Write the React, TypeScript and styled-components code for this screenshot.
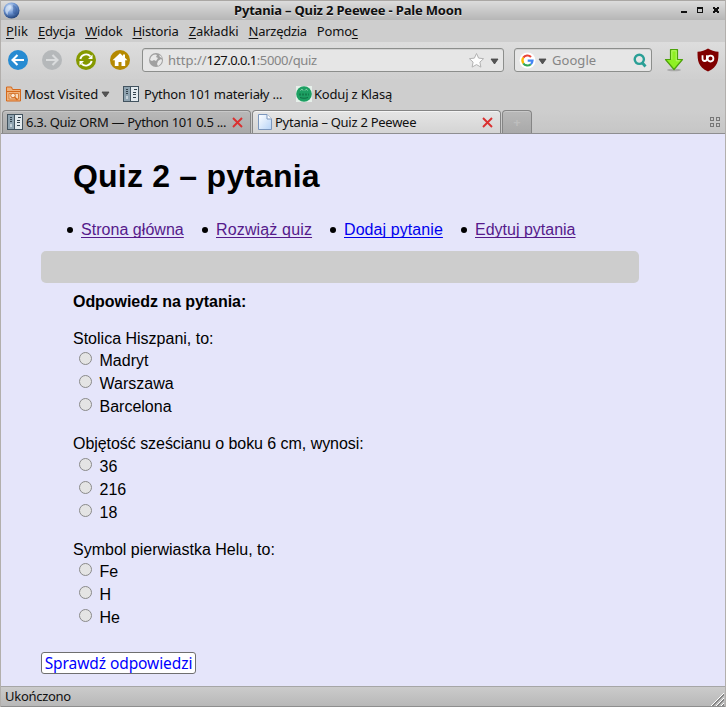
import React from 'react';
import styled, { createGlobalStyle, css } from 'styled-components';

const GlobalStyle = createGlobalStyle`
  * { box-sizing: border-box; }
  html, body { margin: 0; padding: 0; }
  body { width: 726px; height: 707px; overflow: hidden; }
`;

const Window = styled.div`
  width: 726px;
  height: 707px;
  display: flex;
  flex-direction: column;
  border: 1px solid #b2afac;
  border-width: 0 1px;
  background: #cecece;
  font: 13px/18px "Noto Sans", "Open Sans", sans-serif;
  color: #101010;
  white-space: pre;
`;

const Label = styled.span<{ $track?: number }>`
  letter-spacing: ${(p) => p.$track ?? -0.2}px;
  white-space: pre;
  flex: none;
`;

/* Title bar */
const TitleBar = styled.header`
  height: 20px;
  flex: none;
  display: grid;
  grid-template-columns: 60px 1fr 60px;
  align-items: center;
  padding: 0 5px 1px 2px;
  border-top: 1px solid #aaa7a4;
  background: linear-gradient(#dcdcdc, #b6b6b6);
`;

const WindowTitle = styled.h1`
  margin: 0;
  padding-right: 27px;
  text-align: center;
  font-size: 13px;
  line-height: 18px;
  font-weight: 700;
  text-shadow: 0 1px 0 #e4e4e4;
`;

const WindowButtons = styled.div`
  display: flex;
  justify-content: flex-end;
  align-items: center;
`;

/* Menu */
const MenuBar = styled.nav`
  height: 22px;
  flex: none;
  display: flex;
  align-items: center;
  padding: 0 0 1px 5px;
  gap: 10px;
`;

const Mnemonic = styled.span`
  text-decoration: underline;
  text-underline-offset: 2px;
  text-decoration-thickness: 1px;
`;

/* Navigation toolbar */
const Toolbar = styled.div`
  height: 37px;
  flex: none;
  display: flex;
  align-items: center;
  padding: 0 6px 1px 7px;
  background: linear-gradient(#dddddd, #cfcfcf);
`;

const RoundButton = styled.button<{ $color: string }>`
  width: 20px;
  height: 20px;
  margin: 0 14px 0 0;
  padding: 0;
  border: 0;
  border-radius: 50%;
  background: ${(p) => p.$color};
  flex: none;
  display: flex;
`;

const field = css`
  height: 24px;
  flex: none;
  display: flex;
  align-items: center;
  border: 1px solid #8c8e8c;
  border-radius: 3px;
  background: #e6e6e6;
  box-shadow: inset 0 1px 0 #d2d2d2;
`;

const AddressBar = styled.div`
  ${field}
  width: 362px;
  margin-left: -2px;
  padding: 0 4px 0 5px;
`;

const SearchBox = styled.div`
  ${field}
  width: 138px;
  margin-left: 10px;
  padding: 0 4px 0 4px;
`;

const Muted = styled(Label)`
  color: #858585;
`;

const UrlText = styled.div`
  flex: 1;
  padding-left: 4px;
  display: flex;
`;

const SearchHint = styled(Muted)`
  flex: 1;
  margin-left: 5px;
`;

const ToolIcon = styled.div<{ $left: number; $top?: number }>`
  margin-left: ${(p) => p.$left}px;
  padding-top: ${(p) => p.$top ?? 0}px;
  display: flex;
  flex: none;
`;

/* Bookmarks */
const BookmarksBar = styled.div`
  height: 31px;
  flex: none;
  display: flex;
  align-items: center;
  padding: 0 0 2px 5px;
`;

const Bookmark = styled.div<{ $gap: number; $width: number }>`
  display: flex;
  align-items: center;
  gap: ${(p) => p.$gap}px;
  width: ${(p) => p.$width}px;
`;

/* Tabs */
const TabStrip = styled.div`
  height: 24px;
  flex: none;
  display: flex;
  align-items: stretch;
  padding-left: 1px;
  border-bottom: 1px solid #8e8e90;
  background: linear-gradient(#cecece, #c6c6c6);
`;

const Tab = styled.div<{ $active?: boolean; $width: number }>`
  width: ${(p) => p.$width}px;
  display: flex;
  align-items: center;
  padding: 0 7px 1px 4px;
  margin-right: 1px;
  border: 1px solid #858585;
  border-bottom: 0;
  border-radius: 4px 4px 0 0;
  box-shadow: inset 0 1px 0 ${(p) => (p.$active ? '#f4f4f4' : '#c9c9c9')};
  background: ${(p) => (p.$active ? 'linear-gradient(#e5e5e5, #d4d4d4)' : 'linear-gradient(#b9b9b9, #a9a9a9)')};
`;

const TabTitle = styled(Label)`
  flex: 1;
  margin-left: 3px;
`;

const NewTab = styled(Tab)`
  justify-content: center;
  padding: 0;
  color: #bebebe;
  font-weight: 700;
`;

const TabGrid = styled.div`
  flex: 1;
  display: flex;
  justify-content: flex-end;
  align-items: center;
  padding: 0 5px 0 0;
`;

/* Page */
const Page = styled.main`
  flex: 1;
  min-height: 0;
  padding: 24px 0 0 40px;
  background: #e5e5fa;
  color: #000;
  font: 16px/18px "Liberation Sans", Arial, sans-serif;
`;

const Heading = styled.h2`
  margin: 0 0 0 32px;
  font-size: 32px;
  line-height: 36px;
  letter-spacing: 0.2px;
`;

const LinkList = styled.ul`
  list-style: none;
  display: flex;
  margin: 27px 0 0;
  padding: 0 0 0 26px;
`;

const LinkItem = styled.li<{ $width: number }>`
  width: ${(p) => p.$width}px;
  display: flex;
  align-items: center;
  gap: 8px;
  &::before {
    content: '';
    width: 6px;
    height: 6px;
    border-radius: 50%;
    background: #000;
  }
`;

const PageLink = styled.a<{ $fresh?: boolean; $track?: number }>`
  color: ${(p) => (p.$fresh ? '#0000ee' : '#551a8b')};
  letter-spacing: ${(p) => p.$track ?? 0}px;
  text-decoration: underline;
  text-underline-offset: 2px;
  text-decoration-thickness: 1px;
  text-decoration-skip-ink: none;
`;

const MessageBar = styled.div`
  width: 598px;
  height: 32px;
  margin-top: 12px;
  border-radius: 5px;
  background: #cdcdcd;
`;

const Instruction = styled.p`
  margin: 10px 0 0 32px;
  font-weight: 700;
  letter-spacing: -0.05px;
`;

const Questions = styled.div`
  margin: 19px 0 0 32px;
`;

const Question = styled.section`
  height: 105.4px;
`;

const QuestionText = styled.div<{ $track?: number }>`
  height: 18.15px;
  letter-spacing: ${(p) => p.$track ?? 0}px;
`;

const Option = styled.label`
  height: 23px;
  display: flex;
  align-items: flex-start;
  padding: 4px 0 0 6px;
`;

const Radio = styled.span`
  width: 13px;
  height: 13px;
  margin: 0 7.5px 0 0;
  border: 1px solid #8a8a8a;
  border-radius: 50%;
  background: #e4e4e4;
`;

const SubmitButton = styled.button`
  display: flex;
  align-items: center;
  justify-content: center;
  width: 155px;
  height: 22px;
  margin: 5.8px 0 0;
  padding: 0;
  border: 1px solid #6f6f6f;
  border-radius: 3px;
  background: #fff;
  color: #0000ff;
  font: 15.5px/20px "Noto Sans", "Open Sans", sans-serif;
`;

/* Status */
const StatusBar = styled.footer`
  height: 21px;
  flex: none;
  display: flex;
  align-items: center;
  justify-content: space-between;
  padding-left: 4px;
  border-top: 1px solid #a6a6a6;
  border-bottom: 1px solid #8e8e8e;
  background: linear-gradient(#cbcbcb, #b8b8b8);
`;

const StatusText = styled(Label)`
  padding-bottom: 1.5px;
`;

const GripHolder = styled.div`
  display: flex;
  align-self: flex-end;
`;

const MoonIcon = () => (
  <svg width="17" height="17" viewBox="0 0 17 17">
    <defs>
      <radialGradient id="moon" cx=".4" cy=".3" r=".75">
        <stop offset="0" stopColor="#d5e4f8" />
        <stop offset=".5" stopColor="#6e95d2" />
        <stop offset="1" stopColor="#16376f" />
      </radialGradient>
    </defs>
    <circle cx="8.5" cy="8.5" r="8" fill="url(#moon)" />
    <path d="M4 4c3-2 5-1 4 2S4 9 5 13c-3-2-4-6-1-9z" fill="#dce8f8" opacity=".65" />
    <path d="M10 3c4 1 5 5 3 9-2 1-4-1-3-4s-1-3 0-5z" fill="#23498c" opacity=".4" />
  </svg>
);

const WindowControls = () => (
  <svg width="40" height="8" viewBox="0 0 40 8" fill="none" stroke="#111" shapeRendering="crispEdges">
    <path d="M1 6h6" strokeWidth="2" />
    <path d="M17.5 1.5h5v5h-5zM17 2h6" />
    <path d="M33 1h2v1h2v-1h2v2h-1v2h1v2h-2v-1h-2v1h-2v-2h1v-2h-1z" fill="#111" stroke="none" />
  </svg>
);

const ArrowGlyph = ({ flip, color = '#fff' }: { flip?: boolean; color?: string }) => (
  <svg width="20" height="20" viewBox="0 0 20 20" fill="none" stroke={color} strokeWidth="2.1">
    {flip ? <path d="M4 10h11M10.5 5l5 5-5 5" /> : <path d="M16 10H5M9.500 5l-5 5 5 5" />}
  </svg>
);

const ReloadGlyph = () => (
  <svg width="20" height="20" viewBox="0 0 20 20" fill="none" stroke="#fff" strokeWidth="1.9">
    <path d="M4.300 9A6 6 0 0 1 14.500 6.300M15.700 11A6 6 0 0 1 5.500 13.700" />
    <path d="M16.500 4.500V9H12zM3.500 15.500V11H8z" fill="#fff" stroke="none" />
  </svg>
);

const HomeGlyph = () => (
  <svg width="20" height="20" viewBox="0 0 20 20">
    <path d="M10 3.300 2.500 10.300h2.300V16h3.700v-4h3v4h3.700v-5.700h2.300L15 7.700V4.500h-2v1.400z" fill="#fff" />
  </svg>
);

const GlobeIcon = () => (
  <svg width="16" height="16" viewBox="0 0 16 16">
    <circle cx="8" cy="8" r="7" fill="#a0a0a0" />
    <path d="M3 5c2-3 5-3 6-2L8 5l2 1-2 3-2-1-2 1-2-1zM10 9l3-2 1 1c0 3-2 5-4 6l-1-2zM11 3l2 1 1 2-2-1z" fill="#e9e9e9" />
  </svg>
);

const StarIcon = () => (
  <svg width="17" height="17" viewBox="0 0 17 17">
    <path d="M8.500 1.500l2.100 4.600 5 .6-3.700 3.400 1 5-4.400-2.500-4.400 2.500 1-5L1.400 6.700l5-.6z" fill="#fdfdfd" stroke="#b2b2b2" strokeLinejoin="round" />
  </svg>
);

const Caret = () => (
  <svg width="9" height="7" viewBox="0 0 9 7">
    <path d="M1 1h7L4.500 6z" fill="#555" stroke="#444" strokeLinejoin="round" strokeWidth=".8" />
  </svg>
);

const GoogleIcon = () => (
  <svg width="17" height="17" viewBox="0 0 17 17">
    <circle cx="8.500" cy="8.500" r="8" fill="#fff" />
    <g fill="none" strokeWidth="2.200">
      <path d="M4.300 5.700A5 5 0 0 1 12 5" stroke="#ea4335" />
      <path d="M4.300 11.300a5 5 0 0 1 0-5.600" stroke="#fbbc05" />
      <path d="M11.800 12.200a5 5 0 0 1-7.500-.9" stroke="#34a853" />
      <path d="M8.700 8.700h4.800a5 5 0 0 1-1.700 3.500" stroke="#4285f4" />
    </g>
  </svg>
);

const SearchIcon = () => (
  <svg width="14" height="15" viewBox="0 0 14 15" fill="none" stroke="#2a9f96" strokeWidth="2.400">
    <circle cx="6.300" cy="6.300" r="4.600" />
    <path d="M9 9.500l3.500 4" strokeWidth="2.800" />
  </svg>
);

const DownloadIcon = () => (
  <svg width="20" height="24" viewBox="0 0 20 24">
    <ellipse cx="10" cy="22" rx="7" ry="1.300" fill="#aaa" />
    <path d="M6.500 1.500h7v10h5L10 21.500l-8.500-10h5z" fill="#8ff022" stroke="#4da20b" strokeWidth="1.200" strokeLinejoin="round" />
    <path d="M7.800 11.500V2.800h4.400v10h3.300" fill="none" stroke="#b5f56c" />
  </svg>
);

const ShieldIcon = () => (
  <svg width="22" height="24" viewBox="0 0 22 24">
    <path d="M11 .5C8 2.500 4.500 3.500.5 3.800c0 9 .5 15 10.500 19.700C21 18.800 21.500 12.800 21.500 3.800 17.500 3.500 14 2.500 11 .5z" fill="#800000" />
    <g fill="none" stroke="#fff" strokeWidth="1.800">
      <path d="M5.500 7.200v3.600a2.200 2.200 0 0 0 4.400 0V7.200" />
      <circle cx="13.500" cy="10.600" r="2.900" />
    </g>
  </svg>
);

const FolderIcon = () => (
  <svg width="15" height="16" viewBox="0 0 15 16" fill="none" stroke="#d4691c">
    <path d="M.5 15V1h5l1 2.500h8V15z" fill="#efb27c" />
    <path d="M1 5.500h13" />
    <path d="M3 7.500h9.500V13H3z" fill="#f6d9bb" stroke="#d98039" />
    <circle cx="7" cy="9.500" r="2.300" fill="#fbe8d2" />
    <path d="M8.500 11l3 3" strokeWidth="1.500" />
  </svg>
);

const BooksIcon = () => (
  <svg width="16" height="16" viewBox="0 0 16 16" shapeRendering="crispEdges">
    <path d="M0 0h16v16H0z" fill="#42535f" />
    <path d="M1 1h6v14H1z" fill="#8fa3b0" />
    <path d="M8 1h7v14H8z" fill="#e2e9ed" />
    <path d="M3 3h2v1H3zM3 5h2v1H3zM3 7h2v1H3zM11 3h3v1h-3zM10 6h3v1h-3zM10 8h3v1h-3zM10 11h3v1h-3z" fill="#33424d" />
    <path d="M3 10h2v3H3z" fill="#c4d0d8" />
  </svg>
);

const KodujIcon = () => (
  <svg width="16" height="16" viewBox="0 0 16 16">
    <path d="M0 0h16v16H0z" fill="#e6f0ea" />
    <circle cx="8" cy="8" r="7.800" fill="#1d9f62" />
    <g stroke="#0f6f43" fill="none">
      <path d="M3 8.500h10" strokeWidth="2" strokeDasharray="2 1" opacity=".7" />
      <path d="M4 11.500c2.500 1 5.500 1 8 0" />
    </g>
    <path d="M4.500 4.500c1-1.500 2-1.500 2.500 0M9 4.500c1-1.500 2-1.500 2.500 0" stroke="#9bd9b9" fill="none" />
  </svg>
);

const PageIcon = () => (
  <svg width="14" height="16" viewBox="0 0 14 16">
    <defs>
      <linearGradient id="sheet" x2="1" y2="1">
        <stop offset="0" stopColor="#fff" />
        <stop offset="1" stopColor="#b5d3f7" />
      </linearGradient>
    </defs>
    <path d="M.5.5h8.500l4.500 4.500v10.500H.5z" fill="url(#sheet)" stroke="#7c97bd" />
    <path d="M9 .5V5h4.500" fill="#fff" stroke="#7c97bd" />
  </svg>
);

const CloseIcon = () => (
  <svg width="11" height="11" viewBox="0 0 11 11">
    <path d="M1 1l9 9M10 1l-9 9" stroke="#da3030" strokeWidth="1.900" />
  </svg>
);

const GridIcon = () => (
  <svg width="10" height="11" viewBox="0 0 10 11" fill="none" stroke="#777" shapeRendering="crispEdges">
    <path d="M.5 1.500h3v3h-3zM6.500 1.500h3v3h-3zM.5 7.500h3v3h-3zM6.500 7.500h3v3h-3z" />
  </svg>
);

const ResizeGrip = () => (
  <svg width="15" height="14" viewBox="0 0 15 14" shapeRendering="crispEdges">
    <g stroke="#fff">
      <path d="M1 14L14 1M6 14l8-8M11 14l3-3" />
    </g>
    <g stroke="#848484">
      <path d="M2.500 14L14 2.500M7.500 14L14 7.500M12.500 14l1.500-1.500" strokeWidth="1.400" />
    </g>
  </svg>
);

const menus: [string, string, string, number][] = [
  ['', 'P', 'lik', 0.1],
  ['', 'E', 'dycja', -0.25],
  ['', 'W', 'idok', -0.2],
  ['', 'H', 'istoria', -0.2],
  ['', 'Z', 'akładki', -0.08],
  ['', 'N', 'arzędzia', -0.28],
  ['Pomo', 'c', '', -0.2],
];

const links = [
  { text: 'Strona główna', width: 135, track: 0.04 },
  { text: 'Rozwiąż quiz', width: 128, track: 0.15 },
  { text: 'Dodaj pytanie', width: 131, track: 0.08, fresh: true },
  { text: 'Edytuj pytania', width: 125, track: 0 },
];

const questions = [
  { text: 'Stolica Hiszpani, to:', options: ['Madryt', 'Warszawa', 'Barcelona'] },
  { text: 'Objętość sześcianu o boku 6 cm, wynosi:', track: -0.05, options: ['36', '216', '18'] },
  { text: 'Symbol pierwiastka Helu, to:', options: ['Fe', 'H', 'He'] },
];

export default function App() {
  return (
    <Window>
      <GlobalStyle />
      <TitleBar>
        <MoonIcon />
        <WindowTitle><Label $track={-0.18}>Pytania – Quiz 2 Peewee - Pale Moon</Label></WindowTitle>
        <WindowButtons><WindowControls /></WindowButtons>
      </TitleBar>
      <MenuBar>
        {menus.map(([before, key, after, track]) => (
          <Label key={before + key + after} $track={track}>
            {before}<Mnemonic>{key}</Mnemonic>{after}
          </Label>
        ))}
      </MenuBar>
      <Toolbar>
        <RoundButton $color="#268bd2" aria-label="Wstecz"><ArrowGlyph /></RoundButton>
        <RoundButton $color="#b5b8ba" aria-label="Dalej"><ArrowGlyph flip color="#dadcdd" /></RoundButton>
        <RoundButton $color="#859900" aria-label="Odśwież"><ReloadGlyph /></RoundButton>
        <RoundButton $color="#b58900" aria-label="Start"><HomeGlyph /></RoundButton>
        <AddressBar>
          <GlobeIcon />
          <UrlText>
            <Muted $track={0}>http://</Muted>
            <Label $track={-0.55}>127.0.0.1</Label>
            <Muted $track={-0.35}>:5000/quiz</Muted>
          </UrlText>
          <StarIcon />
          <ToolIcon $left={5} $top={2}><Caret /></ToolIcon>
        </AddressBar>
        <SearchBox>
          <GoogleIcon />
          <ToolIcon $left={2} $top={2}><Caret /></ToolIcon>
          <SearchHint $track={0.05}>Google</SearchHint>
          <SearchIcon />
        </SearchBox>
        <ToolIcon $left={12}><DownloadIcon /></ToolIcon>
        <ToolIcon $left={13}><ShieldIcon /></ToolIcon>
      </Toolbar>
      <BookmarksBar>
        <Bookmark $gap={3} $width={117}>
          <FolderIcon />
          <Label $track={-0.05}>Most Visited</Label>
          <ToolIcon $left={0} $top={1}><Caret /></ToolIcon>
        </Bookmark>
        <Bookmark $gap={5} $width={173}>
          <BooksIcon />
          <Label $track={-0.22}>Python 101 materiały ...</Label>
        </Bookmark>
        <Bookmark $gap={2} $width={100}>
          <KodujIcon />
          <Label $track={-0.18}>Koduj z Klasą</Label>
        </Bookmark>
      </BookmarksBar>
      <TabStrip>
        <Tab $width={249}>
          <BooksIcon />
          <TabTitle $track={-0.3}>6.3. Quiz ORM — Python 101 0.5 ...</TabTitle>
          <ToolIcon $left={0} $top={1}><CloseIcon /></ToolIcon>
        </Tab>
        <Tab $width={249} $active>
          <ToolIcon $left={1}><PageIcon /></ToolIcon>
          <TabTitle $track={-0.27}>Pytania – Quiz 2 Peewee</TabTitle>
          <ToolIcon $left={0} $top={1}><CloseIcon /></ToolIcon>
        </Tab>
        <NewTab $width={30}>+</NewTab>
        <TabGrid><GridIcon /></TabGrid>
      </TabStrip>
      <Page>
        <Heading>Quiz 2 – pytania</Heading>
        <LinkList>
          {links.map((l) => (
            <LinkItem key={l.text} $width={l.width}>
              <PageLink $fresh={l.fresh} $track={l.track}>{l.text}</PageLink>
            </LinkItem>
          ))}
        </LinkList>
        <MessageBar />
        <Instruction>Odpowiedz na pytania:</Instruction>
        <Questions>
          {questions.map((q) => (
            <Question key={q.text}>
              <QuestionText $track={q.track}>{q.text}</QuestionText>
              {q.options.map((o) => (
                <Option key={o}>
                  <Radio />
                  {o}
                </Option>
              ))}
            </Question>
          ))}
        </Questions>
        <SubmitButton><Label $track={-0.08}>Sprawdź odpowiedzi</Label></SubmitButton>
      </Page>
      <StatusBar>
        <StatusText $track={-0.28}>Ukończono</StatusText>
        <GripHolder><ResizeGrip /></GripHolder>
      </StatusBar>
    </Window>
  );
}
